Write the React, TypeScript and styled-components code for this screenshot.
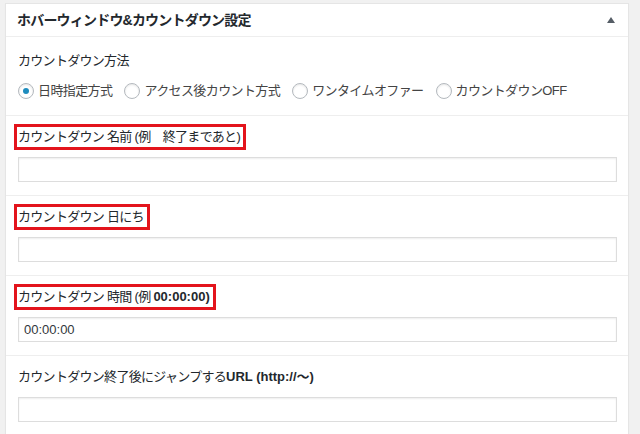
import React from 'react';
import styled, { createGlobalStyle } from 'styled-components';

const GlobalStyle = createGlobalStyle`
  html, body {
    margin: 0;
    padding: 0;
    background: #f1f1f1;
  }
  body {
    font-family: "Liberation Sans", "Noto Sans CJK JP", sans-serif;
    font-size: 13px;
    color: #23282d;
  }
`;

const Page = styled.div`
  padding: 3px 11px 0 5px;
  height: 434px;
  box-sizing: border-box;
  overflow: hidden;
`;

const Postbox = styled.div`
  background: #fff;
  border: 1px solid #e5e5e5;
  box-shadow: 0 1px 1px rgba(0, 0, 0, 0.04);
`;

const Header = styled.div`
  display: flex;
  align-items: center;
  justify-content: space-between;
  height: 32px;
  padding: 0 12px 0 11px;
  border-bottom: 1px solid #eee;
`;

const Title = styled.h2`
  margin: 0;
  font-size: 14px;
  font-weight: 700;
  letter-spacing: -0.8px;
  color: #23282d;
  line-height: 1;
`;

const Toggle = styled.span`
  display: flex;
  width: 10px;
  height: 8px;
  align-items: center;
  justify-content: center;
`;

const Field = styled.div`
  padding: 8px 11px 13px 12px;
  border-bottom: 1px solid #eee;

  &:last-child {
    border-bottom: none;
  }
`;

const MethodField = styled.div`
  padding: 15px 11px 16px 12px;
  border-bottom: 1px solid #eee;
`;

const FieldTitle = styled.div`
  font-size: 13px;
  line-height: 18px;
  letter-spacing: -0.7px;
  color: #23282d;
  margin-bottom: 13px;
`;

const Label = styled.div<{ $marked?: boolean }>`
  display: inline-block;
  margin-left: -4px;
  padding: 0 3px 0 1px;
  border: 3px solid ${p => (p.$marked ? '#e3141c' : 'transparent')};
  font-size: 13px;
  line-height: 20px;
  letter-spacing: -0.7px;
  color: #23282d;
  margin-bottom: 7px;
`;

const Strong = styled.span`
  font-weight: 700;
  letter-spacing: 0;
`;

const Input = styled.input`
  display: block;
  width: 100%;
  height: 25px;
  box-sizing: border-box;
  margin: 0;
  padding: 0 5px;
  border: 1px solid #ddd;
  box-shadow: inset 0 1px 2px rgba(0, 0, 0, 0.07);
  background: #fff;
  font-family: "Liberation Sans", "Noto Sans CJK JP", sans-serif;
  font-size: 13px;
  color: #32373c;
  outline: none;
`;

const RadioRow = styled.div`
  display: flex;
  align-items: center;
  gap: 12px;
`;

const RadioItem = styled.label`
  display: flex;
  align-items: center;
  gap: 4px;
  color: #444;
  font-size: 13px;
  line-height: 16px;
  letter-spacing: -0.6px;
`;

const RadioCircle = styled.span<{ $checked?: boolean }>`
  position: relative;
  width: 14px;
  height: 14px;
  border-radius: 50%;
  border: 1px solid #b4b9be;
  box-shadow: inset 0 1px 2px rgba(0, 0, 0, 0.1);
  background: #fff;

  &::after {
    content: '';
    display: ${p => (p.$checked ? 'block' : 'none')};
    position: absolute;
    left: 4px;
    top: 4px;
    width: 6px;
    height: 6px;
    border-radius: 50%;
    background: #1e8cbe;
  }
`;

const methods = ['日時指定方式', 'アクセス後カウント方式', 'ワンタイムオファー', 'カウントダウンOFF'];

const App: React.FC = () => (
  <Page>
    <GlobalStyle />
    <Postbox>
      <Header>
        <Title>ホバーウィンドウ&amp;カウントダウン設定</Title>
        <Toggle>
          <svg width="8" height="6" viewBox="0 0 8 6">
            <path d="M4 0 L8 6 L0 6 Z" fill="#555d66" />
          </svg>
        </Toggle>
      </Header>

      <MethodField>
        <FieldTitle>カウントダウン方法</FieldTitle>
        <RadioRow>
          {methods.map((m, i) => (
            <RadioItem key={m}>
              <RadioCircle $checked={i === 0} />
              {m}
            </RadioItem>
          ))}
        </RadioRow>
      </MethodField>

      <Field>
        <Label $marked>カウントダウン 名前 (例　終了まであと)</Label>
        <Input defaultValue="" />
      </Field>

      <Field>
        <Label $marked>カウントダウン 日にち</Label>
        <Input defaultValue="" />
      </Field>

      <Field>
        <Label $marked>
          カウントダウン 時間 (例 <Strong>00:00:00)</Strong>
        </Label>
        <Input defaultValue="00:00:00" />
      </Field>

      <Field>
        <Label>
          カウントダウン終了後にジャンプする<Strong>URL (http://〜)</Strong>
        </Label>
        <Input defaultValue="" />
      </Field>
    </Postbox>
  </Page>
);

export default App;
